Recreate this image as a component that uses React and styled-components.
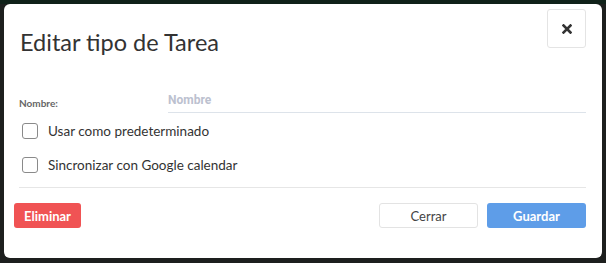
import React, { useState } from "react";
import styled, { createGlobalStyle } from "styled-components";

const GlobalStyle = createGlobalStyle`
  * { box-sizing: border-box; }
  body {
    margin: 0;
    background: linear-gradient(#0f2119 0, #0f2119 4px, #1d1f1e 4px);
    font-family: "Lato", "Open Sans", sans-serif;
  }
`;

const Backdrop = styled.div`
  width: 606px;
  height: 263px;
  padding: 4px 4px 5px 4px;
`;

const Modal = styled.div`
  width: 598px;
  height: 254px;
  background: #ffffff;
  border-radius: 6px;
  display: flex;
  flex-direction: column;
`;

const Header = styled.div`
  display: flex;
  justify-content: space-between;
  align-items: flex-start;
  height: 44px;
  padding: 5px 16px 0 16px;
`;

const Title = styled.h2`
  margin: 18px 0 0;
  font-size: 23.5px;
  line-height: 30px;
  font-weight: 400;
  color: #333333;
`;

const CloseButton = styled.button`
  width: 39px;
  height: 39px;
  border: 1px solid #e4e4e4;
  border-radius: 3px;
  background: #ffffff;
  display: flex;
  align-items: center;
  justify-content: center;
  padding: 0;
  cursor: pointer;
`;

const Body = styled.div`
  padding: 0 16px 0 15px;
`;

const FieldRow = styled.div`
  margin-top: 40px;
  display: grid;
  grid-template-columns: 149px 1fr;
  height: 25px;
`;

const Label = styled.label`
  align-self: end;
  padding-bottom: 4px;
  font-size: 10px;
  font-weight: 700;
  color: #666666;
`;

const TextInput = styled.input`
  border: none;
  border-bottom: 1px solid #dde3ea;
  outline: none;
  padding: 0 0 1px;
  font-family: "Roboto", sans-serif;
  font-size: 12px;
  font-weight: 700;
  color: #333;
  &::placeholder { color: #bcc1cf; }
`;

const CheckList = styled.div`
  display: flex;
  flex-direction: column;
  gap: 10px;
  margin-top: 6px;
  padding-bottom: 10px;
  border-bottom: 1px solid #e6e6e6;
`;

const CheckRow = styled.label`
  display: flex;
  align-items: center;
  gap: 10px;
  height: 24px;
  padding-left: 3px;
  font-size: 13.5px;
  color: #333333;
  cursor: pointer;
`;

const Box = styled.span`
  width: 16px;
  height: 16px;
  border: 1px solid #8a8a8a;
  border-radius: 3px;
  background: ${(p) => (p.$checked ? "#5e9de8" : "#fff")};
`;

const Footer = styled.div`
  display: flex;
  align-items: center;
  gap: 9px;
  padding: 15px 16px 0 10px;
`;

const Button = styled.button`
  height: 25px;
  min-width: ${(p) => (p.$wide ? "99px" : "67px")};
  padding: 0 7px;
  border-radius: 3px;
  font-family: "Lato", sans-serif;
  font-size: 13px;
  font-weight: ${(p) => (p.$variant === "default" ? 400 : 700)};
  cursor: pointer;
  border: 1px solid
    ${(p) => (p.$variant === "default" ? "#e3e3e3" : "transparent")};
  color: ${(p) => (p.$variant === "default" ? "#444444" : "#ffffff")};
  background: ${(p) =>
    p.$variant === "danger" ? "#f05354" : p.$variant === "primary" ? "#5e9de8" : "#ffffff"};
`;

const Spacer = styled.div`
  flex: 1;
`;

const CloseIcon = () => (
  <svg width="10" height="10" viewBox="0 0 10 10">
    <path d="M1.5 1.5 L8.5 8.5 M8.5 1.5 L1.5 8.5" stroke="#333" strokeWidth="2.6" strokeLinecap="square" />
  </svg>
);

export default function App() {
  const [checks, setChecks] = useState({ def: false, google: false });
  const toggle = (k) => setChecks((c) => ({ ...c, [k]: !c[k] }));

  return (
    <>
      <GlobalStyle />
      <Backdrop>
        <Modal>
          <Header>
            <Title>Editar tipo de Tarea</Title>
            <CloseButton aria-label="Cerrar">
              <CloseIcon />
            </CloseButton>
          </Header>
          <Body>
            <FieldRow>
              <Label>Nombre:</Label>
              <TextInput placeholder="Nombre" />
            </FieldRow>
            <CheckList>
              <CheckRow onClick={() => toggle("def")}>
                <Box $checked={checks.def} />
                Usar como predeterminado
              </CheckRow>
              <CheckRow onClick={() => toggle("google")}>
                <Box $checked={checks.google} />
                Sincronizar con Google calendar
              </CheckRow>
            </CheckList>
          </Body>
          <Footer>
            <Button $variant="danger">Eliminar</Button>
            <Spacer />
            <Button $variant="default" $wide>Cerrar</Button>
            <Button $variant="primary" $wide>Guardar</Button>
          </Footer>
        </Modal>
      </Backdrop>
    </>
  );
}
